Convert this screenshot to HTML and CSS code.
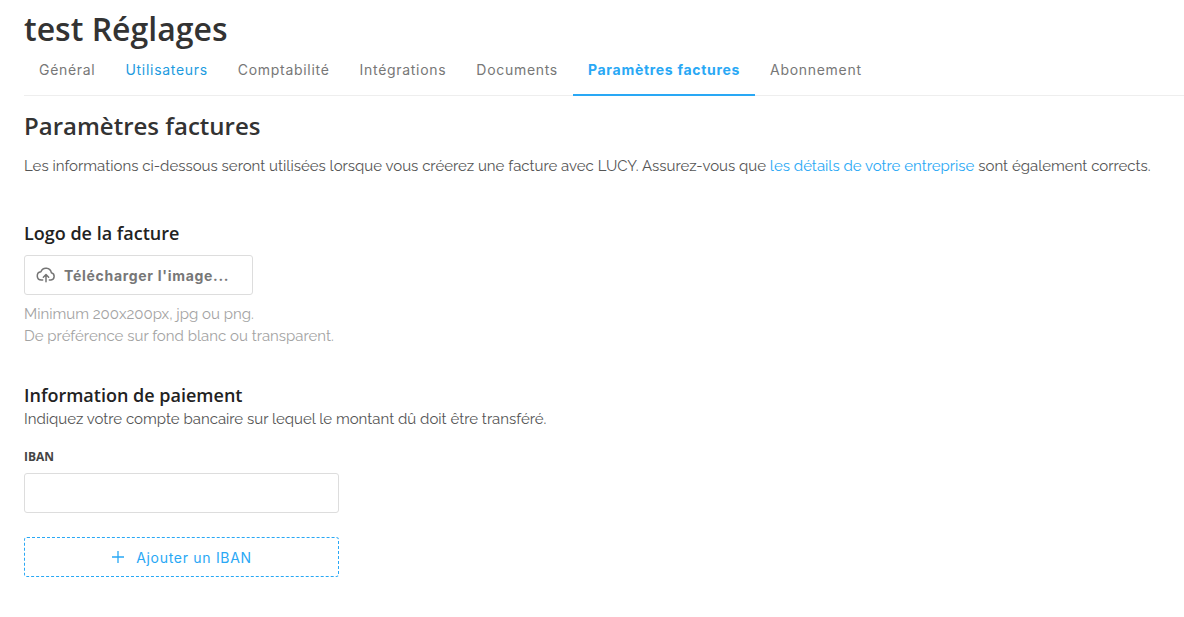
FILE: index.html
```html
<!DOCTYPE html>
<html>
  <head>
    <meta charset="utf-8">
    <title>test Réglages</title>
    <link rel="stylesheet" href="styles.css">
  </head>
  <body>
    <h1 class="page-title">test Réglages</h1>
    <div class="tabs">
      <a class="tab">Général</a>
      <a class="tab tab-link">Utilisateurs</a>
      <a class="tab">Comptabilité</a>
      <a class="tab">Intégrations</a>
      <a class="tab">Documents</a>
      <a class="tab tab-active">Paramètres factures</a>
      <a class="tab">Abonnement</a>
    </div>
    <h2 class="section-title">Paramètres factures</h2>
    <p class="intro">Les informations ci-dessous seront utilisées lorsque vous créerez une facture avec LUCY. Assurez-vous que <a class="link">les détails de votre entreprise</a> sont également corrects.</p>

    <h3 class="block-title logo-title">Logo de la facture</h3>
    <button class="upload">
      <svg width="20" height="20" viewBox="0 0 24 24" fill="none" stroke="#757575" stroke-width="1.8" stroke-linecap="round" stroke-linejoin="round">
        <path d="M8 18H6.5a5 5 0 0 1-.6-9.96A6.5 6.5 0 0 1 18.4 9.2 4.5 4.5 0 0 1 18 18h-2"/>
        <path d="M12 20v-8M8.8 14.6 12 11.5l3.2 3.1"/>
      </svg>
      <span>Télécharger l'image...</span>
    </button>
    <p class="hint">Minimum 200x200px, jpg ou png.<br>De préférence sur fond blanc ou transparent.</p>

    <h3 class="block-title pay-title">Information de paiement</h3>
    <p class="pay-text">Indiquez votre compte bancaire sur lequel le montant dû doit être transféré.</p>

    <label class="field-label" for="iban">IBAN</label>
    <input class="field" id="iban" type="text">
    <button class="add-iban">
      <svg width="14" height="14" viewBox="0 0 14 14" fill="none" stroke="#29a8f5" stroke-width="1.3"><path d="M7 1v12M1 7h12"/></svg>
      <span>Ajouter un IBAN</span>
    </button>
  </body>
</html>
```

FILE: styles.css
```css
* {
    box-sizing: border-box;
}
body {
    margin: 0;
    padding: 0 0 0 24px;
    font-family: Raleway, "Open Sans", "Liberation Sans", sans-serif;
    color: #555;
    background: #fff;
    overflow: hidden;
}
.page-title {
    margin: 0;
    padding-top: 9px;
    font-family: "Open Sans", sans-serif;
    font-size: 32px;
    line-height: 40px;
    font-weight: 600;
    color: #333;
}
.tabs {
    display: flex;
    height: 47px;
    border-bottom: 1px solid #eee;
}
.tab {
    padding: 0 15px;
    font-family: Inter, sans-serif;
    font-size: 14px;
    line-height: 42px;
    letter-spacing: 0.7px;
    color: #777;
}
.tab-link {
    color: #1d9be0;
}
.tab-active {
    color: #29a8f5;
    font-weight: 700;
    border-bottom: 2px solid #29a8f5;
    height: 47px;
}
.section-title {
    margin: 14px 0 0;
    font-family: "Open Sans", sans-serif;
    font-size: 24px;
    line-height: 32px;
    font-weight: 600;
    color: #333;
}
.intro {
    margin: 13px 0 0;
    font-size: 15px;
    line-height: 22px;
    white-space: nowrap;
}
.link {
    color: #29a8f5;
}
.block-title {
    margin: 0;
    font-family: "Open Sans", sans-serif;
    font-size: 18px;
    line-height: 24px;
    font-weight: 600;
    color: #222;
}
.logo-title {
    margin-top: 44px;
}
.upload {
    display: flex;
    align-items: center;
    gap: 8px;
    width: 229px;
    height: 40px;
    margin-top: 10px;
    padding: 0 11px;
    background: #fff;
    border: 1px solid #ddd;
    border-radius: 3px;
    font-family: Inter, sans-serif;
    font-size: 14px;
    font-weight: 700;
    letter-spacing: 0.7px;
    color: #777;
}
.hint {
    margin: 8px 0 0;
    font-size: 15px;
    line-height: 22px;
    color: #a3a3a3;
}
.pay-title {
    margin-top: 36px;
}
.pay-text {
    margin: 1px 0 0;
    font-size: 15px;
    line-height: 22px;
}
.field-label {
    display: block;
    margin-top: 18px;
    font-family: "Open Sans", sans-serif;
    font-size: 12px;
    line-height: 18px;
    font-weight: 700;
    color: #444;
}
.field {
    display: block;
    width: 315px;
    height: 40px;
    margin-top: 7px;
    border: 1px solid #ddd;
    border-radius: 3px;
}
.add-iban {
    display: flex;
    align-items: center;
    justify-content: center;
    gap: 11px;
    width: 315px;
    height: 40px;
    margin-top: 24px;
    background: #fff;
    border: 1px dashed #29a8f5;
    border-radius: 3px;
    font-family: Inter, sans-serif;
    font-size: 14px;
    letter-spacing: 0.7px;
    color: #29a8f5;
}
```
